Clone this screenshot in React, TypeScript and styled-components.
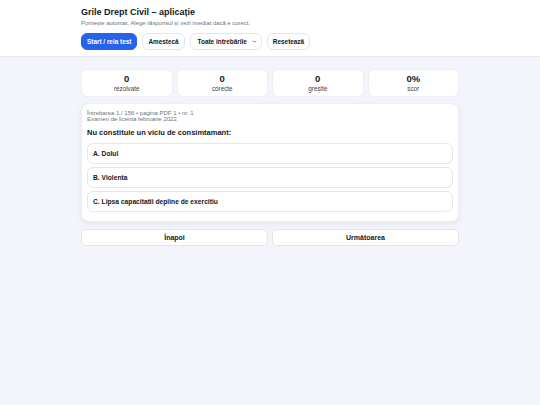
import styled, { createGlobalStyle } from 'styled-components';

const GlobalStyle = createGlobalStyle`
  html, body {
    margin: 0;
    padding: 0;
    background: #f4f5fc;
    font-family: "Liberation Sans", Arial, sans-serif;
    color: #111827;
  }
  * {
    box-sizing: border-box;
  }
`;

const Header = styled.header`
  background: #ffffff;
  border-bottom: 1px solid #e6e8f0;
  padding: 6px 0 6px;
`;

const Container = styled.div`
  width: 378px;
  margin: 0 auto;
`;

const Title = styled.h1`
  margin: 0;
  font-size: 9px;
  font-weight: 700;
  line-height: 12px;
  color: #111827;
`;

const Subtitle = styled.p`
  margin: 1px 0 0;
  font-size: 5.9px;
  line-height: 9px;
  color: #6b7280;
`;

const Toolbar = styled.div`
  display: flex;
  gap: 5px;
  margin-top: 5px;
  align-items: center;
`;

const ToolButton = styled.button<{ $primary?: boolean }>`
  height: 17px;
  padding: 0 5px;
  border-radius: 6px;
  font-family: inherit;
  font-size: 6.4px;
  font-weight: 700;
  border: 1px solid ${({ $primary }) => ($primary ? '#2563eb' : '#e2e5ee')};
  background: ${({ $primary }) => ($primary ? '#2563eb' : '#ffffff')};
  color: ${({ $primary }) => ($primary ? '#ffffff' : '#111827')};
`;

const SelectBox = styled.div`
  height: 17px;
  display: flex;
  align-items: center;
  gap: 5px;
  padding: 0 4px 0 7px;
  border-radius: 6px;
  border: 1px solid #e2e5ee;
  background: #ffffff;
  font-size: 6.4px;
  font-weight: 700;
`;

const Caret = styled.svg`
  width: 5px;
  height: 5px;
`;

const Main = styled(Container)`
  padding-top: 12px;
`;

const Stats = styled.div`
  display: grid;
  grid-template-columns: repeat(4, 1fr);
  gap: 4px;
`;

const StatCard = styled.div`
  background: #ffffff;
  border: 1px solid #eceef5;
  border-radius: 6px;
  height: 28px;
  display: flex;
  flex-direction: column;
  align-items: center;
  justify-content: center;
`;

const StatValue = styled.div`
  font-size: 9.5px;
  font-weight: 700;
  line-height: 10px;
  color: #111827;
`;

const StatLabel = styled.div`
  font-size: 6.3px;
  line-height: 9px;
  color: #374151;
`;

const QuestionCard = styled.section`
  margin-top: 6px;
  background: #ffffff;
  border: 1px solid #eceef5;
  border-radius: 8px;
  box-shadow: 0 2px 6px rgba(30, 40, 90, 0.08);
  padding: 6px 5px 9px;
`;

const Meta = styled.div`
  font-size: 6px;
  line-height: 6px;
  color: #6b7280;
`;

const Question = styled.h2`
  margin: 6px 0 5px;
  font-size: 7.5px;
  line-height: 10px;
  font-weight: 700;
  color: #111827;
`;

const Options = styled.div`
  display: flex;
  flex-direction: column;
  gap: 3px;
`;

const Option = styled.button`
  height: 21px;
  text-align: left;
  padding: 0 5px;
  border-radius: 6px;
  border: 1px solid #e6e8f0;
  background: #ffffff;
  font-family: inherit;
  font-size: 6.7px;
  font-weight: 700;
  color: #111827;
`;

const Nav = styled.div`
  display: grid;
  grid-template-columns: 1fr 1fr;
  gap: 4px;
  margin-top: 7px;
`;

const NavButton = styled.button`
  height: 17px;
  border-radius: 5px;
  border: 1px solid #e2e5ee;
  background: #ffffff;
  font-family: inherit;
  font-size: 7px;
  font-weight: 700;
  color: #111827;
`;

const stats = [
  { value: '0', label: 'rezolvate' },
  { value: '0', label: 'corecte' },
  { value: '0', label: 'greșite' },
  { value: '0%', label: 'scor' },
];

const options = ['A. Dolul', 'B. Violenta', 'C. Lipsa capacitatii depline de exercitiu'];

export default function App() {
  return (
    <>
      <GlobalStyle />
      <Header>
        <Container>
          <Title>Grile Drept Civil – aplicație</Title>
          <Subtitle>Pornește automat. Alege răspunsul și vezi imediat dacă e corect.</Subtitle>
          <Toolbar>
            <ToolButton $primary>Start / reia test</ToolButton>
            <ToolButton>Amestecă</ToolButton>
            <SelectBox>
              Toate întrebările
              <Caret viewBox="0 0 10 10">
                <path d="M2 3.5 L5 6.5 L8 3.5" fill="none" stroke="#374151" strokeWidth="1.4" />
              </Caret>
            </SelectBox>
            <ToolButton>Resetează</ToolButton>
          </Toolbar>
        </Container>
      </Header>
      <Main>
        <Stats>
          {stats.map((s) => (
            <StatCard key={s.label}>
              <StatValue>{s.value}</StatValue>
              <StatLabel>{s.label}</StatLabel>
            </StatCard>
          ))}
        </Stats>
        <QuestionCard>
          <Meta>Întrebarea 1 / 156 • pagina PDF 1 • nr. 1</Meta>
          <Meta>Examen de licenta februarie 2022</Meta>
          <Question>Nu constituie un viciu de consimtamant:</Question>
          <Options>
            {options.map((o) => (
              <Option key={o}>{o}</Option>
            ))}
          </Options>
        </QuestionCard>
        <Nav>
          <NavButton>Înapoi</NavButton>
          <NavButton>Următoarea</NavButton>
        </Nav>
      </Main>
    </>
  );
}
